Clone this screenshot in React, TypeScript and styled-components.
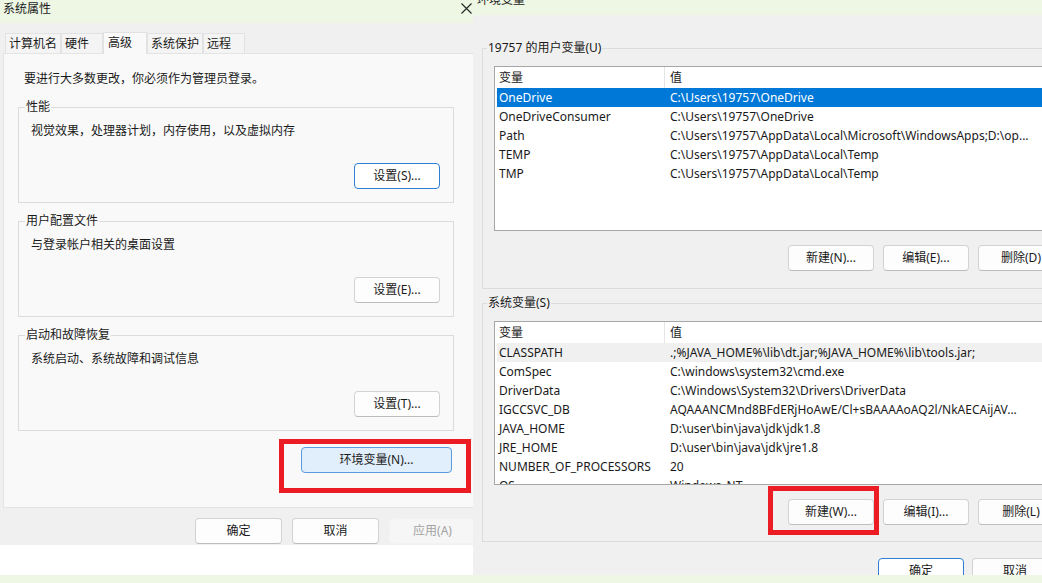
import React from "react";
import styled, { createGlobalStyle, css } from "styled-components";

const GlobalStyle = createGlobalStyle`
    html, body {
        margin: 0;
        padding: 0;
    }
    body {
        width: 1042px;
        height: 583px;
        overflow: hidden;
        background: #edf7e4;
        font-family: "Noto Sans", "Noto Sans CJK SC", sans-serif;
        font-size: 12px;
        line-height: 16px;
        color: #1a1a1a;
    }
`

const Desktop = styled.div`
    display: flex;
    width: 1042px;
    height: 583px;
    overflow: hidden;
`

/* ---------- left window: 系统属性 ---------- */

const LeftColumn = styled.div`
    width: 473px;
    flex-shrink: 0;
    overflow: hidden;
    display: flex;
    flex-direction: column;
`

const TitleBar = styled.div`
    height: 23px;
    flex-shrink: 0;
    display: flex;
    justify-content: space-between;
    align-items: flex-start;
    padding: 1px 1px 0 3px;
    box-sizing: border-box;
`

const CloseGlyph = styled.svg`
    margin-top: 2px;
`

const WindowBody = styled.div`
    width: 486px;
    height: 522px;
    flex-shrink: 0;
    background: #f0f0f0;
    display: flex;
    flex-direction: column;
`

const TabStrip = styled.div`
    display: flex;
    align-items: flex-end;
    padding: 9px 0 0 5px;
`

const Tab = styled.div<{ $active?: boolean }>`
    height: 20px;
    line-height: 20px;
    min-width: 42px;
    padding: 0 3px;
    box-sizing: border-box;
    border: 1px solid #e2e2e2;
    border-bottom: none;
    background: #f4f4f4;
    white-space: nowrap;

    ${p => p.$active && css`
        position: relative;
        z-index: 1;
        height: 22px;
        min-width: 44px;
        padding: 0 4px;
        margin-bottom: -1px;
        line-height: 20px;
        background: #f9f9f9;
    `}
`

const TabPanel = styled.div`
    margin-left: 3px;
    width: 480px;
    height: 455px;
    box-sizing: border-box;
    border: 1px solid #e4e4e4;
    background: #f9f9f9;
    padding: 17px 0 0 14px;
`

const Intro = styled.div`
    margin-left: 6px;
`

const GroupBox = styled.fieldset<{ $w: number; $top: number; $pb: number }>`
    width: ${p => p.$w}px;
    box-sizing: border-box;
    margin: ${p => p.$top}px 0 0 0;
    padding: 0 0 ${p => p.$pb}px 0;
    border: 1px solid #dcdcdc;
    min-width: 0;
`

const GroupLabel = styled.legend<{ $indent: number }>`
    margin-left: ${p => p.$indent}px;
    padding: 0 1px;
    line-height: 16px;
`

const GroupText = styled.div`
    margin: 8px 0 0 12px;
`

const ButtonRow = styled.div<{ $top: number; $right: number; $gap?: number }>`
    display: flex;
    justify-content: flex-end;
    gap: ${p => p.$gap ?? 10}px;
    margin-top: ${p => p.$top}px;
    padding-right: ${p => p.$right}px;
`

type Tone = "plain" | "focus" | "accent" | "disabled"

const Button = styled.button<{ $w: number; $tone?: Tone }>`
    position: relative;
    width: ${p => p.$w}px;
    height: 26px;
    box-sizing: border-box;
    padding: 0;
    border-radius: 4px;
    border: 1px solid #d3d3d3;
    border-bottom-color: #bdbdbd;
    background: #fdfdfd;
    font: inherit;
    color: #1a1a1a;
    white-space: nowrap;

    ${p => p.$tone === "focus" && css`
        border: 1px solid #2f7fd6;
        background: #ffffff;
    `}
    ${p => p.$tone === "accent" && css`
        border: 1px solid #5a9be0;
        background: #e1eefb;
    `}
    ${p => p.$tone === "disabled" && css`
        border: 1px solid #f2f2f2;
        background: #f6f6f6;
        color: #a3a3a3;
    `}
`

const Mark = styled.span<{ $x: number; $y: number; $w: number; $h: number }>`
    position: absolute;
    left: ${p => p.$x}px;
    top: ${p => p.$y}px;
    width: ${p => p.$w}px;
    height: ${p => p.$h}px;
    box-sizing: border-box;
    border: 5px solid #ec1c24;
    pointer-events: none;
`

const WhiteBand = styled.div`
    height: 30px;
    flex-shrink: 0;
    background: #ffffff;
`

/* ---------- right window: 环境变量 ---------- */

const RightColumn = styled.div`
    flex: 1;
    overflow: hidden;
    display: flex;
    flex-direction: column;
`

const TitleStrip = styled.div`
    height: 15px;
    flex-shrink: 0;
    overflow: hidden;
    padding-left: 4px;
`

const TitleText = styled.div`
    margin-top: -8px;
`

const EnvWindow = styled.div`
    width: 612px;
    height: 560px;
    flex-shrink: 0;
    box-sizing: border-box;
    overflow: hidden;
    background: #f0f0f0;
    padding: 25px 0 0 9px;
`

const ListBox = styled.div<{ $h: number }>`
    width: 570px;
    height: ${p => p.$h}px;
    margin: 10px 0 0 11px;
    box-sizing: border-box;
    border: 1px solid #a6a6a6;
    background: #ffffff;
    padding-left: 2px;
    overflow: hidden;
`

const Row = styled.div<{ $kind?: "header" | "selected" | "hover" }>`
    display: grid;
    grid-template-columns: 168px 1fr;
    height: 19px;
    line-height: 19px;
    white-space: nowrap;

    ${p => p.$kind === "header" && css`
        height: 21px;
        line-height: 21px;
    `}
    ${p => p.$kind === "selected" && css`
        background: #0078d7;
        color: #ffffff;
    `}
    ${p => p.$kind === "hover" && css`
        background: #f0f0f0;
    `}
`

const NameCell = styled.div<{ $divider?: boolean }>`
    padding-left: 2px;
    overflow: hidden;
    ${p => p.$divider && css`
        border-right: 1px solid #e5e5e5;
    `}
`

const ValueCell = styled.div`
    padding-left: 5px;
    overflow: hidden;
`

interface EnvVar {
    name: string;
    value: string;
    kind?: "selected" | "hover";
}

const userVars: EnvVar[] = [
    { name: "OneDrive", value: "C:\\Users\\19757\\OneDrive", kind: "selected" },
    { name: "OneDriveConsumer", value: "C:\\Users\\19757\\OneDrive" },
    { name: "Path", value: "C:\\Users\\19757\\AppData\\Local\\Microsoft\\WindowsApps;D:\\op..." },
    { name: "TEMP", value: "C:\\Users\\19757\\AppData\\Local\\Temp" },
    { name: "TMP", value: "C:\\Users\\19757\\AppData\\Local\\Temp" },
]

const systemVars: EnvVar[] = [
    { name: "CLASSPATH", value: ".;%JAVA_HOME%\\lib\\dt.jar;%JAVA_HOME%\\lib\\tools.jar;", kind: "hover" },
    { name: "ComSpec", value: "C:\\windows\\system32\\cmd.exe" },
    { name: "DriverData", value: "C:\\Windows\\System32\\Drivers\\DriverData" },
    { name: "IGCCSVC_DB", value: "AQAAANCMnd8BFdERjHoAwE/Cl+sBAAAAoAQ2l/NkAECAijAV..." },
    { name: "JAVA_HOME", value: "D:\\user\\bin\\java\\jdk\\jdk1.8" },
    { name: "JRE_HOME", value: "D:\\user\\bin\\java\\jdk\\jre1.8" },
    { name: "NUMBER_OF_PROCESSORS", value: "20" },
    { name: "OS", value: "Windows_NT" },
]

const tabs = ["计算机名", "硬件", "高级", "系统保护", "远程"]

const sections = [
    { title: "性能", text: "视觉效果，处理器计划，内存使用，以及虚拟内存", button: "设置(S)...", tone: "focus" as Tone },
    { title: "用户配置文件", text: "与登录帐户相关的桌面设置", button: "设置(E)...", tone: "plain" as Tone },
    { title: "启动和故障恢复", text: "系统启动、系统故障和调试信息", button: "设置(T)...", tone: "plain" as Tone },
]

const VarList = ({ vars, height }: { vars: EnvVar[]; height: number }): JSX.Element => (
    <ListBox $h={height}>
        <Row $kind="header">
            <NameCell $divider>变量</NameCell>
            <ValueCell>值</ValueCell>
        </Row>
        {vars.map(v => (
            <Row key={v.name} $kind={v.kind}>
                <NameCell>{v.name}</NameCell>
                <ValueCell>{v.value}</ValueCell>
            </Row>
        ))}
    </ListBox>
)

const App = (): JSX.Element => {
    return (
        <Desktop>
            <GlobalStyle />
            <LeftColumn>
                <TitleBar>
                    <span>系统属性</span>
                    <CloseGlyph width="11" height="11" viewBox="0 0 11 11">
                        <path d="M0.5 0.5 L10.5 10.5 M10.5 0.5 L0.5 10.5" stroke="#222" strokeWidth="1.1" fill="none" />
                    </CloseGlyph>
                </TitleBar>
                <WindowBody>
                    <TabStrip>
                        {tabs.map((t, i) => (
                            <Tab key={t} $active={i === 2}>{t}</Tab>
                        ))}
                    </TabStrip>
                    <TabPanel>
                        <Intro>要进行大多数更改，你必须作为管理员登录。</Intro>
                        {sections.map((s, i) => (
                            <GroupBox key={s.title} $w={436} $top={i === 0 ? 12 : 10} $pb={13}>
                                <GroupLabel $indent={6}>{s.title}</GroupLabel>
                                <GroupText>{s.text}</GroupText>
                                <ButtonRow $top={24} $right={13}>
                                    <Button $w={86} $tone={s.tone}>{s.button}</Button>
                                </ButtonRow>
                            </GroupBox>
                        ))}
                        <ButtonRow $top={16} $right={30}>
                            <Button $w={151} $tone="accent">
                                环境变量(N)...
                                <Mark $x={-23} $y={-9} $w={192} $h={54} />
                            </Button>
                        </ButtonRow>
                    </TabPanel>
                    <ButtonRow $top={10} $right={10}>
                        <Button $w={87}>确定</Button>
                        <Button $w={87}>取消</Button>
                        <Button $w={87} $tone="disabled">应用(A)</Button>
                    </ButtonRow>
                </WindowBody>
                <WhiteBand />
            </LeftColumn>

            <RightColumn>
                <TitleStrip>
                    <TitleText>环境变量</TitleText>
                </TitleStrip>
                <EnvWindow>
                    <GroupBox $w={594} $top={0} $pb={17}>
                        <GroupLabel $indent={4}>19757 的用户变量(U)</GroupLabel>
                        <VarList vars={userVars} height={165} />
                        <ButtonRow $top={14} $right={11} $gap={9}>
                            <Button $w={86}>新建(N)...</Button>
                            <Button $w={86}>编辑(E)...</Button>
                            <Button $w={86}>删除(D)</Button>
                        </ButtonRow>
                    </GroupBox>
                    <GroupBox $w={594} $top={6} $pb={16}>
                        <GroupLabel $indent={4}>系统变量(S)</GroupLabel>
                        <VarList vars={systemVars} height={164} />
                        <ButtonRow $top={14} $right={11} $gap={9}>
                            <Button $w={86}>
                                新建(W)...
                                <Mark $x={-21} $y={-14} $w={111} $h={49} />
                            </Button>
                            <Button $w={86}>编辑(I)...</Button>
                            <Button $w={86}>删除(L)</Button>
                        </ButtonRow>
                    </GroupBox>
                    <ButtonRow $top={16} $right={27} $gap={8}>
                        <Button $w={86} $tone="focus">确定</Button>
                        <Button $w={86}>取消</Button>
                    </ButtonRow>
                </EnvWindow>
            </RightColumn>
        </Desktop>
    )
};

export default App;
